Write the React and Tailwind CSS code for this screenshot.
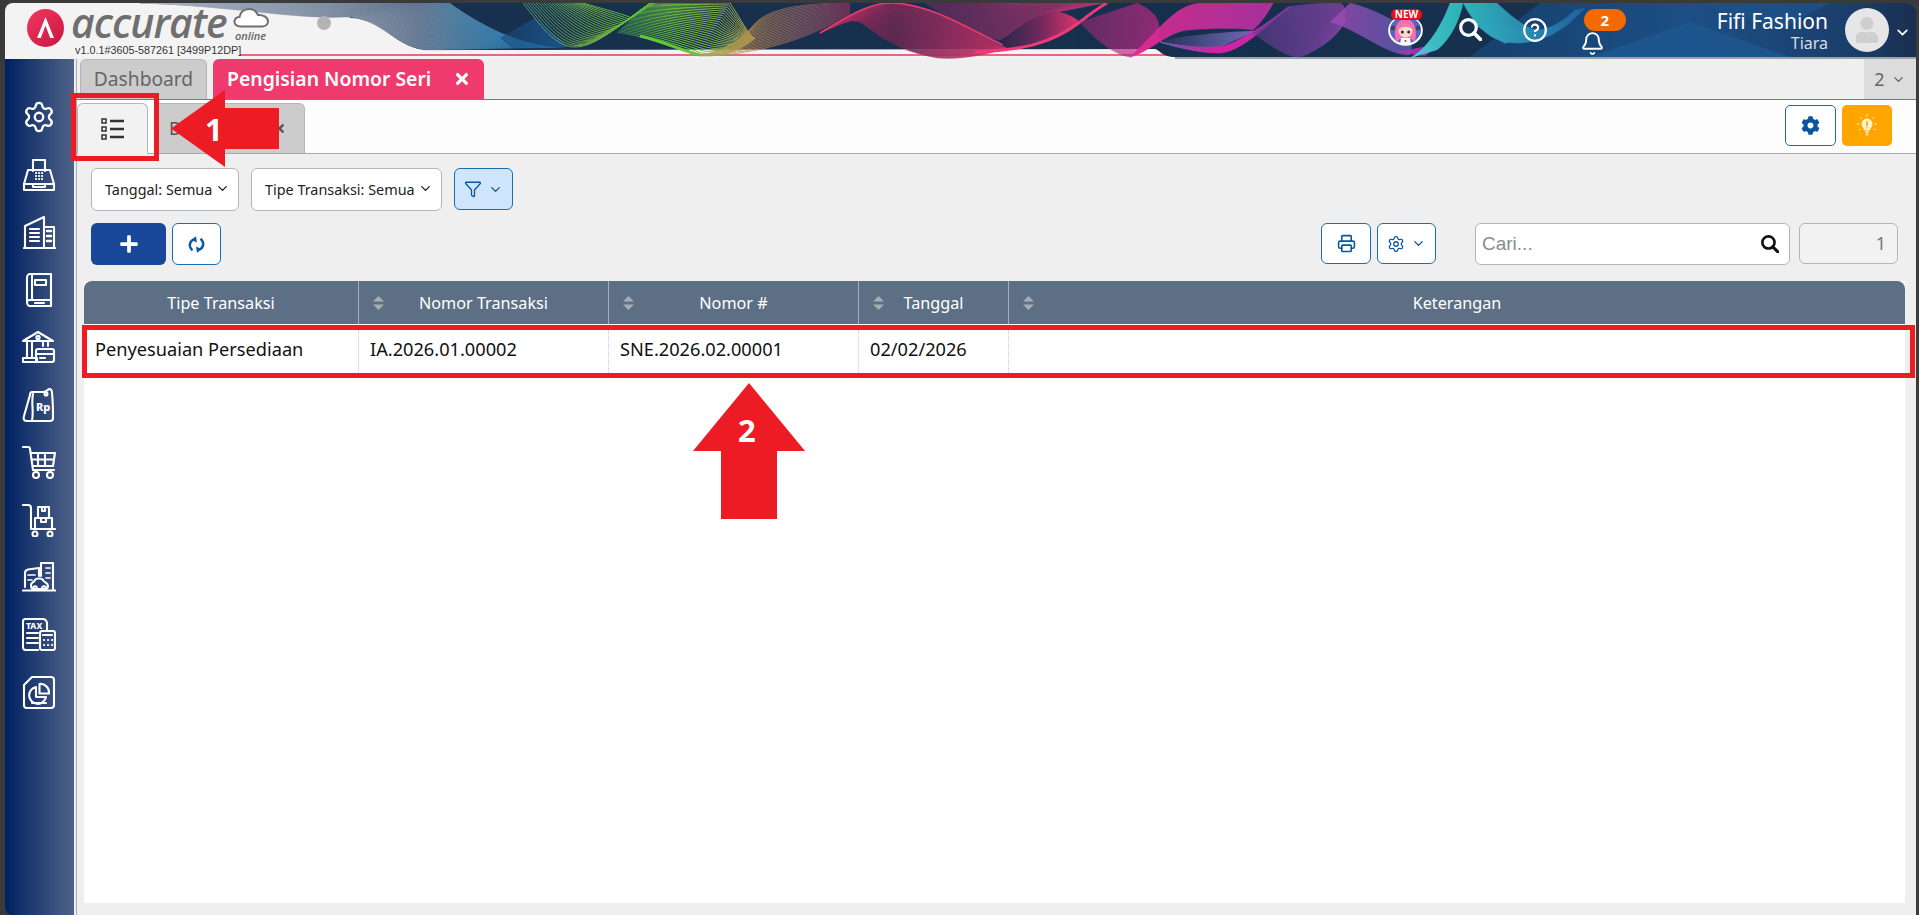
import React from "react";
import { Settings, ChevronDown, Funnel, Printer, CircleHelp, Bell } from "lucide-react";
import { FaCog, FaTimes, FaPlus, FaUser } from "react-icons/fa";

const toD = (v) => {
  let d = `M${v[0].toFixed(1)} ${v[1].toFixed(1)}`;
  for (let i = 2; i < v.length; i += 6) {
    d += `C${v.slice(i, i + 6).map((x) => x.toFixed(1)).join(" ")}`;
  }
  return d;
};
const interp = (a, b, t) => toD(a.map((n, i) => n + (b[i] - n) * t));
const reversed = (v) => {
  const out = [];
  for (let i = v.length - 2; i >= 0; i -= 2) out.push(v[i], v[i + 1]);
  return out;
};
const fillD = (a, b) => {
  const r = reversed(b);
  let d = toD(a) + `L${r[0]} ${r[1]}`;
  for (let i = 2; i < r.length; i += 6) d += `C${r.slice(i, i + 6).join(" ")}`;
  return d + "Z";
};

const Ribbon = ({ a, b, id, n = 26, w = 0.7, o = 0.85, f = 0, ls }) => (
  <g>
    {f > 0 && <path d={fillD(a, b)} fill={`url(#${id})`} opacity={f} />}
    <g stroke={ls || `url(#${id})`} strokeWidth={w} fill="none" opacity={o}>
      {Array.from({ length: n }, (_, i) => (
        <path key={i} d={interp(a, b, i / (n - 1))} />
      ))}
    </g>
  </g>
);

const Grad = ({ id, x1, x2, stops }) => (
  <linearGradient id={id} gradientUnits="userSpaceOnUse" x1={x1} x2={x2} y1="0" y2="0">
    {stops.map(([o, c], i) => (
      <stop key={i} offset={o} stopColor={c} />
    ))}
  </linearGradient>
);

const HeaderArt = () => (
  <svg className="absolute inset-0 h-full w-full" viewBox="5 3 1911 56" preserveAspectRatio="none">
    <defs>
      <Grad id="g1" x1={140} x2={565} stops={[[0, "#f3f3f3"], [0.45, "#9aa3b5"], [0.65, "#6f8098"], [0.85, "#3585b5"], [1, "#1a70b0"]]} />
      <Grad id="ga" x1={523} x2={650} stops={[[0, "#5a9a70"], [0.6, "#6fb040"], [1, "#62cc30"]]} />
      <Grad id="gb" x1={617} x2={755} stops={[[0, "#2f7a50"], [0.4, "#70c838"], [0.75, "#90b848"], [1, "#b89a50"]]} />
      <Grad id="gc" x1={700} x2={850} stops={[[0, "#a0b050"], [0.35, "#b88a50"], [0.7, "#a0606a"], [1, "#803058"]]} />
      <Grad id="gp" x1={820} x2={1007} stops={[[0, "#a02858"], [0.4, "#50264e"], [1, "#d03068"]]} />
      <Grad id="gq" x1={925} x2={1105} stops={[[0, "#7a2a60"], [0.6, "#c83070"], [1, "#e03a80"]]} />
      <Grad id="gd" x1={1000} x2={1080} stops={[[0, "#24294c"], [0.5, "#70285c"], [1, "#e03470"]]} />
      <Grad id="gm" x1={1080} x2={1170} stops={[[0, "#8a2a70"], [1, "#d82a90"]]} />
      <Grad id="gu" x1={1130} x2={1273} stops={[[0, "#e02a90"], [1, "#b832a8"]]} />
      <Grad id="gl" x1={1160} x2={1290} stops={[[0, "#5a62a8"], [0.4, "#d820a8"], [1, "#c030b0"]]} />
      <Grad id="gi" x1={1160} x2={1253} stops={[[0, "#24305a"], [1, "#7a70c0"]]} />
      <Grad id="g6" x1={1253} x2={1345} stops={[[0, "#5a3a88"], [1, "#9a48b8"]]} />
      <Grad id="g7" x1={1330} x2={1415} stops={[[0, "#a848b8"], [1, "#5a62b8"]]} />
      <Grad id="gt" x1={1410} x2={1463} stops={[[0, "#50c8d8"], [1, "#2cb8b8"]]} />
      <Grad id="g8" x1={1463} x2={1585} stops={[[0, "#30b8c0"], [0.5, "#2a90b0"], [1, "#2060a0"]]} />
      <Grad id="gbg" x1={1470} x2={1916} stops={[[0, "#15406e"], [0.5, "#1c4f85"], [0.85, "#1a3e6c"], [1, "#1a2f50"]]} />
      <Grad id="gs" x1={500} x2={565} stops={[[0, "#1a4070"], [1, "#1c70b8"]]} />
    </defs>
    <rect x="240" y="54" width="930" height="2" fill="#e9667f" />
    <path d="M350 3L350 18C385 18 395 50 430 50L1155 49C1160 50 1162 57 1175 57L1916 57L1916 3Z" fill="#17304e" />
    <path d="M1470 57L1540 3L1916 3L1916 57Z" fill="url(#gbg)" />
    <path d="M1590 57L1690 22L1790 57Z" fill="#1e5a92" opacity="0.7" />
    <path d="M1700 3L1780 30L1830 3Z" fill="#1c5288" opacity="0.8" />
    <rect x="1175" y="57" width="741" height="2" fill="#9aa3ad" />
    <Ribbon id="g1" a={[140, 3, 220, 5, 300, 20, 345, 17, 385, 18, 395, 50, 430, 50, 460, 50, 490, 49, 530, 48]} b={[140, 3, 220, 3, 300, 3, 400, 3, 430, 3, 440, 3, 450, 3, 480, 25, 520, 46, 565, 48]} f={1} n={22} w={0.6} o={0.35} ls="#2a4a6a" />
    <path d="M500 38L535 18L568 47L512 48Z" fill="url(#gs)" opacity="0.55" />
    <Ribbon id="ga" a={[523, 3, 540, 25, 555, 47, 575, 47, 595, 47, 615, 28, 650, 3]} b={[583, 3, 600, 8, 620, 13, 632, 18, 638, 14, 645, 8, 655, 3]} n={24} w={1} o={0.95} />
    <Ribbon id="gb" a={[617, 32, 640, 36, 665, 42, 700, 55, 715, 57, 735, 55, 755, 38]} b={[650, 3, 680, 3, 710, 3, 730, 3, 738, 15, 745, 28, 752, 37]} n={26} w={1} o={0.95} />
    <path d="M640 36C665 42 680 50 700 55" stroke="#62c830" strokeWidth="3" fill="none" />
    <Ribbon id="gc" a={[700, 56, 730, 56, 790, 50, 850, 14]} b={[745, 42, 752, 20, 765, 3, 850, 3]} n={22} w={0.8} o={0.85} f={0.2} />
    <Ribbon id="gq" a={[925, 3, 950, 20, 975, 35, 1000, 40, 1015, 30, 1035, 14, 1057, 12]} b={[1010, 3, 1020, 3, 1040, 3, 1060, 3, 1070, 3, 1080, 3, 1105, 3]} n={24} w={0.6} o={0.6} f={0.45} />
    <path d="M905 50C925 57 950 60 985 50Z" fill="#8a7a95" opacity="0.7" />
    <Ribbon id="gp" a={[820, 33, 850, 20, 850, 20, 860, 22, 880, 35, 895, 50, 937, 58, 960, 60, 985, 55, 1007, 48]} b={[820, 33, 850, 15, 870, 3, 890, 3, 930, 3, 970, 30, 1000, 45, 1003, 46, 1005, 47, 1007, 48]} n={30} w={0.6} o={0.5} f={0.8} ls="#d83068" />
    <path d="M820 33C850 15 870 3 890 3C930 3 970 30 1003 45" stroke="#e83a70" strokeWidth="1.6" fill="none" />
    <Ribbon id="gd" a={[1000, 42, 1020, 25, 1040, 12, 1057, 12, 1065, 12, 1075, 18, 1080, 22]} b={[1007, 48, 1040, 48, 1060, 38, 1080, 22, 1080, 22, 1080, 22, 1080, 22]} n={8} w={0.5} o={0.3} f={1} />
    <path d="M975 52C1020 50 1050 45 1080 22C1090 14 1098 8 1107 3" stroke="#ee3a78" strokeWidth="3" fill="none" />
    <Ribbon id="gm" a={[1080, 22, 1095, 40, 1115, 55, 1130, 57]} b={[1137, 3, 1155, 12, 1165, 20, 1155, 45]} n={24} w={0.6} o={0.6} f={0.6} />
    <Ribbon id="gu" a={[1130, 57, 1150, 52, 1170, 30, 1190, 30, 1210, 28, 1240, 28, 1253, 30, 1262, 22, 1268, 12, 1273, 3]} b={[1130, 57, 1160, 30, 1175, 3, 1203, 3, 1225, 3, 1250, 3, 1273, 3, 1273, 3, 1273, 3, 1273, 3]} n={24} w={0.6} o={0.6} f={0.85} />
    <Ribbon id="gi" a={[1165, 43, 1185, 47, 1205, 48, 1220, 48, 1230, 42, 1245, 36, 1253, 32]} b={[1165, 40, 1185, 36, 1220, 32, 1253, 31, 1253, 31, 1253, 31, 1253, 32]} n={6} w={0.5} o={0.3} f={0.9} />
    <Ribbon id="gl" a={[1160, 42, 1185, 50, 1205, 53, 1220, 53, 1245, 50, 1265, 25, 1290, 7]} b={[1160, 42, 1190, 48, 1210, 48, 1225, 46, 1240, 40, 1255, 32, 1290, 7]} n={12} w={0.8} o={0.9} f={0.9} />
    <Ribbon id="g6" a={[1253, 33, 1270, 45, 1285, 57, 1300, 57, 1320, 50, 1340, 35, 1345, 20]} b={[1287, 7, 1295, 5, 1320, 3, 1340, 3, 1345, 5, 1345, 10, 1345, 20]} n={24} w={0.6} o={0.6} f={0.6} />
    <Ribbon id="g7" a={[1330, 22, 1360, 30, 1385, 55, 1410, 55]} b={[1350, 3, 1380, 10, 1395, 25, 1415, 28]} n={24} w={0.6} o={0.6} f={0.7} />
    <path d="M1395 52L1440 44L1425 56Z" fill="#b030b0" opacity="0.9" />
    <path d="M1470 22L1540 30L1505 44Z" fill="#3c80e0" opacity="0.85" />
    <Ribbon id="gt" a={[1410, 58, 1425, 50, 1440, 30, 1450, 3]} b={[1437, 50, 1450, 40, 1460, 20, 1463, 3]} n={12} w={0.6} o={0.5} f={0.95} />
    <Ribbon id="g8" a={[1463, 3, 1475, 25, 1490, 43, 1515, 43, 1540, 43, 1560, 35, 1585, 8]} b={[1497, 3, 1510, 15, 1525, 28, 1537, 30, 1550, 30, 1565, 20, 1575, 10]} n={16} w={0.6} o={0.5} f={0.95} />
  </svg>
);

const Logo = () => (
  <svg width="37" height="38" viewBox="0 0 37 38" className="shrink-0">
    <defs>
      <linearGradient id="lg" x1="0" y1="0" x2="1" y2="1">
        <stop offset="0" stopColor="#f0385f" />
        <stop offset="1" stopColor="#c9173f" />
      </linearGradient>
    </defs>
    <ellipse cx="18.5" cy="19" rx="18.5" ry="19" fill="url(#lg)" />
    <path d="M10 29L18.5 8L27 29L23.2 29L18.5 16.5L13.8 29Z" fill="#fff" />
  </svg>
);

const Cloud = () => (
  <svg width="36" height="20" viewBox="0 0 36 20" fill="none" stroke="#6f6f6f" strokeWidth="2">
    <path d="M8 18.5C3 18.5 1 15.5 1.5 13C2 10.5 4 9 6.5 9C7 4.5 11 1 16 1C20.5 1 23.5 3.5 25 7C29.5 6.5 35 9 35 13.5C35 17 32 18.5 29 18.5Z" fill="#fff" />
  </svg>
);

const Chibi = () => (
  <svg width="35" height="31" viewBox="0 0 35 31">
    <ellipse cx="17.5" cy="15.5" rx="17.3" ry="15.3" fill="#fff" />
    <ellipse cx="17.5" cy="15" rx="15.5" ry="13.5" fill="#4f68c4" />
    <circle cx="5" cy="13" r="2.4" fill="#445" />
    <circle cx="30" cy="13" r="2.4" fill="#445" />
    <path d="M8 27C5 14 9 4 17.5 4C26 4 30 14 27 27L23 24L12 24Z" fill="#f36fae" />
    <ellipse cx="17.5" cy="16" rx="7" ry="6.5" fill="#fbdccb" />
    <path d="M10.5 14C12 8 23 8 24.5 14C20 11 15 11 10.5 14Z" fill="#f36fae" />
    <circle cx="14.3" cy="17" r="1.5" fill="#402030" />
    <circle cx="20.7" cy="17" r="1.5" fill="#402030" />
    <path d="M12 30L13 23H22L23 30Z" fill="#fff" />
    <circle cx="17.5" cy="26" r="1" fill="#d22" />
  </svg>
);

const Loupe = ({ size, sw, className = "" }) => (
  <svg width={size} height={size} viewBox="0 0 23 23" fill="none" stroke="currentColor" className={className}>
    <circle cx="9.5" cy="9.5" r="7.8" strokeWidth={sw} />
    <path d="M15 15L21.5 21.5" strokeWidth={sw + 0.6} strokeLinecap="round" />
  </svg>
);

const S = { fill: "none", stroke: "#fff", strokeWidth: 2.1, strokeLinejoin: "round", strokeLinecap: "round" };

const Fax = () => (
  <svg width="34" height="34" viewBox="0 0 34 34" {...S}>
    <path d="M11 13V2H23V13" />
    <path d="M6 12H28L32 26V32H2V26Z" />
    <path d="M2 26H32M11 26V29H23V26" />
    <path d="M14 15h.1M17 15h.1M20 15h.1M14 18h.1M17 18h.1M20 18h.1M14 21h.1M17 21h.1M20 21h.1" strokeWidth="2.2" />
  </svg>
);
const Building = () => (
  <svg width="34" height="34" viewBox="0 0 34 34" {...S}>
    <path d="M2 33H33" />
    <path d="M3 33V11L22 2V33" />
    <path d="M22 12H32V33" />
    <path d="M8 14H17M8 18H17M8 22H17M8 26H17" />
    <path d="M25 16H29M25 21H29M25 26H29" strokeWidth="2.4" />
  </svg>
);
const Book = () => (
  <svg width="34" height="34" viewBox="0 0 34 34" {...S}>
    <path d="M5 28V5C5 3 6 1 8 1H29V33H8C6 33 5 31 5 29C5 27 6 27 8 27H29" />
    <path d="M10 1V27" />
    <rect x="13" y="7" width="11" height="5" />
    <path d="M13 30H22" />
  </svg>
);
const Bank = () => (
  <svg width="34" height="34" viewBox="0 0 34 34" {...S}>
    <path d="M1 11L16 2L31 11Z" />
    <circle cx="16" cy="7.5" r="1.6" />
    <path d="M5 12V27M10 12V27M21 12V16M26 12V16" />
    <path d="M1 32V28H15V32Z" />
    <rect x="14" y="19" width="18" height="13" rx="2" />
    <path d="M14 24H32M18 28H23" />
  </svg>
);
const Tag = () => (
  <svg width="34" height="34" viewBox="0 0 34 34" {...S}>
    <path d="M10 4H22C25 3 27 1 27 1C29 1 30 3 30 5C31 14 31 24 31 30C31 32 30 33 28 33H5C2 33 1 31 2 28L8 7C8 5 9 4 10 4Z" />
    <path d="M11 6C9 14 12 24 10 33" />
    <circle cx="24" cy="6" r="1.5" />
    <text x="14" y="23" fontSize="11" fontWeight="800" fill="#fff" stroke="none" fontFamily="'Noto Sans',sans-serif">Rp</text>
  </svg>
);
const Cart = () => (
  <svg width="34" height="34" viewBox="0 0 34 34" {...S}>
    <path d="M1 2H6C7 2 8 3 8 4L11 25H32" />
    <path d="M9 8H33L31 21H11" />
    <path d="M16 8V21M23 8V21M10 14.5H32" />
    <circle cx="14" cy="30" r="3" />
    <circle cx="28" cy="30" r="3" />
  </svg>
);
const Trolley = () => (
  <svg width="34" height="34" viewBox="0 0 34 34" {...S}>
    <path d="M1 2H6C8 2 9 3 9 5V26H33" />
    <rect x="13" y="15" width="17" height="11" />
    <rect x="16" y="4" width="11" height="11" />
    <path d="M20 4V8H23V4M19 15V19H24V15" />
    <circle cx="13" cy="31" r="2.5" />
    <circle cx="28" cy="31" r="2.5" />
  </svg>
);
const City = () => (
  <svg width="34" height="30" viewBox="0 0 34 30" {...S}>
    <path d="M1 28.5H34" />
    <path d="M3 25V11C3 9 4 8 6 7.5L17 6V14" />
    <path d="M19 14V1H31V28" />
    <path d="M24 6H28M24 11H28M24 16H28M6 13H13M6 18H10" strokeWidth="1.7" />
    <path d="M9 23C9 20 12 21 13 18C14 16 20 16 21 18C22 21 26 20 26 24C26 27 24 27 23 27H11C9 27 9 25 9 23Z" />
    <circle cx="13" cy="26" r="1.8" />
    <circle cx="22" cy="26" r="1.8" />
  </svg>
);
const Tax = () => (
  <svg width="34" height="33" viewBox="0 0 34 33" {...S}>
    <path d="M16 32H4C2 32 1 31 1 29V3C1 2 2 1 4 1H21C23 1 25 3 25 5V12" />
    <text x="4" y="11" fontSize="8.5" fontWeight="800" fill="#fff" stroke="none" fontFamily="'Noto Sans',sans-serif">TAX</text>
    <path d="M5 15H16M5 20H16M5 25H16" />
    <rect x="18" y="13" width="15" height="19" rx="2" />
    <path d="M21 17H30" />
    <path d="M22 22h.1M26 22h.1M30 22h.1M22 27h.1M26 27h.1M30 27h.1" strokeWidth="2.2" />
  </svg>
);
const Report = () => (
  <svg width="34" height="33" viewBox="0 0 34 33" {...S}>
    <path d="M10 1H29C31 1 32 2 32 4V29C32 31 31 32 29 32H5C3 32 2 31 2 29V9Z" />
    <path d="M14 11A8.5 8.5 0 1 0 24 21H14Z" />
    <path d="M17.5 8A8.5 8.5 0 0 1 27 17.5H17.5Z" />
    <path d="M10 27H24" />
  </svg>
);

const SortIcon = () => (
  <svg width="11" height="14" viewBox="0 0 11 14" className="absolute left-[14px] top-1/2 -translate-y-1/2" fill="#a8adb3">
    <path d="M5.5 0L11 5.6H0Z" />
    <path d="M5.5 14L0 8.4H11Z" />
  </svg>
);

const Chev = ({ className = "" }) => <ChevronDown size={15} strokeWidth={2.2} className={className} />;

const ListIcon = () => (
  <svg width="24" height="22" viewBox="0 0 24 22" fill="none" stroke="#333">
    <rect x="1" y="1" width="4" height="4" strokeWidth="1.5" />
    <rect x="1" y="9" width="4" height="4" strokeWidth="1.5" />
    <rect x="1" y="17" width="4" height="4" strokeWidth="1.5" />
    <path d="M9 3H23M9 11H23M9 19H23" strokeWidth="2.4" />
  </svg>
);

const Bulb = () => (
  <svg width="20" height="24" viewBox="0 0 20 24" fill="none" stroke="#fff4c8">
    <path d="M10 5C6.5 5 5 7.5 5 10C5 12.5 7 14 7.5 16H12.5C13 14 15 12.5 15 10C15 7.5 13.5 5 10 5Z" fill="#fff4c8" />
    <path d="M8 18H12M8.5 20.5H11.5" strokeWidth="1.5" />
    <path d="M10 7.5V12M10 13.3V14.2" stroke="#ffa500" strokeWidth="1.6" />
    <path d="M10 0V2.5M3 3L4.5 4.8M17 3L15.5 4.8M0 10H2.5M17.5 10H20M1.5 16L3.5 15M18.5 16L16.5 15" strokeWidth="1" />
  </svg>
);

const SyncIcon = () => (
  <svg width="17" height="19" viewBox="0 0 17 19" fill="none" stroke="#0b559e" strokeWidth="2.4">
    <path d="M5.5 4.5C2.5 6 1.5 9 2 11.5C2.4 13.2 3.3 14.4 4.5 15.3" />
    <path d="M11.5 14.5C14.5 13 15.5 10 15 7.5C14.6 5.8 13.7 4.6 12.5 3.7" />
    <path d="M8.5 1.5V8L3.5 4.5Z" fill="#0b559e" stroke="none" transform="rotate(-8 6 5)" />
    <path d="M8.5 17.5V11L13.5 14.5Z" fill="#0b559e" stroke="none" transform="rotate(-8 11 14)" />
  </svg>
);

const cols = ["w-[275px]", "w-[250px]", "w-[250px]", "w-[150px]", "flex-1"];
const heads = ["Tipe Transaksi", "Nomor Transaksi", "Nomor #", "Tanggal", "Keterangan"];
const cells = ["Penyesuaian Persediaan", "IA.2026.01.00002", "SNE.2026.02.00001", "02/02/2026", ""];

const side = [
  <Settings key="a" size={36} strokeWidth={1.6} color="#fff" />,
  <Fax key="b" />, <Building key="c" />, <Book key="d" />, <Bank key="e" />, <Tag key="f" />,
  <Cart key="g" />, <Trolley key="h" />, <City key="i" />, <Tax key="j" />, <Report key="k" />,
];

export default function App() {
  return (
    <div className="relative flex h-[915px] w-[1919px] flex-col overflow-hidden bg-[#3a3a3a] pl-[5px] pr-[3px] pt-[3px] font-['Noto_Sans',sans-serif] text-[#222]">
      <header className="relative h-[56px] shrink-0 overflow-hidden rounded-t-[8px] bg-[#f3f3f3]">
        <HeaderArt />
        <div className="relative flex h-full items-start">
          <div className="ml-[22px] mt-[6px]"><Logo /></div>
          <div className="relative ml-[7px] h-full w-[200px]">
            <span className="absolute left-0 top-0 font-['Open_Sans',sans-serif] text-[41px] font-semibold italic leading-[38px] tracking-[-1px] text-[#6f6f6f]">accurate</span>
            <span className="absolute left-[162px] top-[5px]"><Cloud /></span>
            <span className="absolute left-[164px] top-[26px] font-['Open_Sans',sans-serif] text-[11px] font-semibold italic leading-[14px] text-[#666]">online</span>
            <span className="absolute left-[4px] top-[41px] whitespace-nowrap font-['Liberation_Sans',sans-serif] text-[10.8px] leading-[12px] text-[#333]">v1.0.1#3605-587261 [3499P12DP]</span>
          </div>
          <span className="ml-[46px] mt-[13px] h-[14px] w-[14px] rounded-full bg-[#b4b4b4]" />
          <div className="ml-auto flex h-full items-start text-white">
            <div className="relative mr-[36px] mt-[12px] h-[31px] w-[35px]">
              <Chibi />
              <span className="absolute left-[3px] top-[-6px] rounded-full bg-[#e8101a] px-[4px] text-[10px] font-bold leading-[11px]">NEW</span>
            </div>
            <Loupe size={23} sw={3.2} className="mr-[40px] mt-[15px]" />
            <CircleHelp size={26} strokeWidth={2} className="mr-[32px] mt-[14px]" />
            <div className="relative mr-[112px] mt-[28px]">
              <Bell size={25} strokeWidth={1.8} />
              <span className="absolute left-[4px] top-[-22px] flex h-[22px] w-[42px] items-center justify-center rounded-full bg-[#f56a00] text-[15px] font-bold">2</span>
            </div>
            <div className="mr-[17px] mt-[4px] text-right">
              <div className="text-[21px] leading-[28px]">Fifi Fashion</div>
              <div className="-mt-[2px] text-[16px] leading-[20px] text-[#d8dee6]">Tiara</div>
            </div>
            <div className="mt-[5px] flex h-[44px] w-[44px] items-center justify-center overflow-hidden rounded-full bg-[#e6e6e6]">
              <FaUser size={26} color="#cfcfcf" />
            </div>
            <ChevronDown size={17} strokeWidth={2.5} className="ml-[5px] mr-[5px] mt-[21px]" />
          </div>
        </div>
      </header>

      <div className="flex min-h-0 flex-1">
        <aside className="flex w-[69px] shrink-0 flex-col items-center gap-[23.5px] rounded-bl-[8px] bg-gradient-to-r from-[#002060] to-[#506289] pr-[2px] pt-[41px]">
          {side.map((icon, i) => (
            <div key={i} className="flex h-[34px] w-[34px] items-center justify-center">{icon}</div>
          ))}
        </aside>

        <main className="flex min-w-0 flex-1 flex-col bg-[#efefef] pl-[2px]">
          <div className="flex h-[41px] shrink-0 items-end border-b border-l border-b-[#e0486f] border-l-[#a9a9a9] pl-[3px]">
            <div className="flex h-[40px] w-[127px] items-center justify-center rounded-t-[6px] border border-b-0 border-[#b5b5b5] bg-[#cccccc] text-[19.2px] text-[#666]">Dashboard</div>
            <div className="ml-[6px] flex h-[40px] w-[271px] items-center rounded-t-[6px] bg-[#ee3a6c] pl-[14px] pr-[13px] text-[19.4px] font-semibold text-white">
              <span className="whitespace-nowrap">Pengisian Nomor Seri</span>
              <FaTimes size={18} className="ml-auto" />
            </div>
            <div className="ml-auto flex h-[40px] w-[52px] items-center justify-center gap-[6px] bg-[#dcdcdc] text-[#666]">
              <span className="text-[18px]">2</span><Chev />
            </div>
          </div>

          <div className="flex min-h-0 flex-1 flex-col border-l border-[#a9a9a9]">
            <div className="flex h-[54px] shrink-0 items-end border-b border-[#aaa] bg-[#fdfdfd] pr-[24px]">
              <div className="-mb-px flex h-[51px] w-[71px] items-center justify-center rounded-t-[6px] border border-b-0 border-[#b5b5b5] bg-[#f2f2f2]"><ListIcon /></div>
              <div className="ml-[6px] flex h-[50px] w-[151px] items-center justify-between rounded-t-[6px] border border-b-0 border-[#b5b5b5] bg-[#cccccc] pl-[14px] pr-[18px] text-[18px] text-[#555]">
                <span>D</span><FaTimes size={13} />
              </div>
              <div className="ml-auto flex gap-[6px] self-start pt-[5px]">
                <button className="flex h-[41px] w-[51px] items-center justify-center rounded-[5px] border border-[#1c6cb0] bg-white text-[#0b559e]"><FaCog size={19} /></button>
                <button className="flex h-[41px] w-[50px] items-center justify-center rounded-[5px] bg-[#ffa500]"><Bulb /></button>
              </div>
            </div>

            <div className="flex min-h-0 flex-1 flex-col pb-[12px] pl-[7px] pr-[11px]">
              <div className="ml-[7px] mt-[14px] flex h-[43px] shrink-0 gap-[12px] text-[14.4px] text-[#222]">
                <button className="flex w-[148px] items-center gap-[3px] rounded-[6px] border border-[#b5b5b5] bg-white pl-[13px]"><span className="whitespace-nowrap">Tanggal: Semua</span><Chev className="-mt-[3px]" /></button>
                <button className="flex w-[191px] items-center gap-[3px] rounded-[6px] border border-[#b5b5b5] bg-white pl-[13px]"><span className="whitespace-nowrap">Tipe Transaksi: Semua</span><Chev className="-mt-[3px]" /></button>
                <button className="flex h-[42px] w-[59px] items-center justify-center gap-[6px] rounded-[6px] border border-[#1c6cb0] bg-[#cfe5fb] text-[#0b559e]"><Funnel size={18} strokeWidth={1.7} /><Chev /></button>
              </div>

              <div className="ml-[7px] mt-[12px] flex h-[42px] shrink-0 items-start">
                <button className="flex h-[42px] w-[75px] items-center justify-center rounded-[6px] bg-[#19479a] text-white"><FaPlus size={20} /></button>
                <button className="ml-[6px] flex h-[42px] w-[49px] items-center justify-center rounded-[6px] border border-[#1c6cb0] bg-white"><SyncIcon /></button>
                <div className="ml-auto flex">
                  <button className="flex h-[41px] w-[50px] items-center justify-center rounded-[6px] border border-[#1c6cb0] bg-white text-[#0b559e]"><Printer size={19} strokeWidth={2} /></button>
                  <button className="ml-[6px] flex h-[41px] w-[59px] items-center justify-center gap-[6px] rounded-[6px] border border-[#1c6cb0] bg-white text-[#0b559e]"><Settings size={18} strokeWidth={1.7} /><Chev /></button>
                  <div className="ml-[39px] flex h-[42px] w-[315px] items-center rounded-[6px] border border-[#b5b5b5] bg-white pl-[6px] pr-[10px]">
                    <span className="font-['Liberation_Sans',sans-serif] text-[19px] text-[#8b8b8b]">Cari...</span>
                    <Loupe size={18} sw={3.4} className="ml-auto text-[#111]" />
                  </div>
                  <div className="ml-[9px] mr-[7px] flex h-[41px] w-[99px] items-center justify-end rounded-[6px] border border-[#b5b5b5] bg-[#f2f2f2] pr-[11px] text-[18px] text-[#777]">1</div>
                </div>
              </div>

              <div className="mt-[16px] flex min-h-0 flex-1 flex-col bg-white">
                <div className="flex h-[43px] shrink-0 items-stretch rounded-t-[8px] bg-[#5c6f85] text-[16.2px] text-white">
                  {heads.map((h, i) => (
                    <div key={h} className={`${cols[i]} relative flex items-center justify-center pt-[2px] ${i < 4 ? "border-r border-[#a4adb8]" : ""}`}>
                      {i > 0 && <SortIcon />}
                      {h}
                    </div>
                  ))}
                </div>
                <div className="mt-px flex h-[50px] shrink-0 text-[18.2px] text-[#111]">
                  {cells.map((c, i) => (
                    <div key={i} className={`${cols[i]} flex items-center pb-[1px] pl-[11px] ${i < 4 ? "border-r border-dotted border-[#c8c8c8]" : ""}`}>{c}</div>
                  ))}
                </div>
              </div>
            </div>
          </div>
        </main>
      </div>

      {/* annotations drawn over the page */}
      <div className="absolute left-[71px] top-[93px] h-[68px] w-[88px] border-[5px] border-[#ed1c24]" />
      <div className="absolute left-[82px] top-[325px] h-[53px] w-[1833px] border-[5px] border-[#ed1c24]" />
      <svg className="absolute left-[171px] top-[90px]" width="108" height="77" viewBox="0 0 108 77">
        <path d="M0 38.5L54 0V18H108V59H54V77Z" fill="#ed1c24" />
      </svg>
      <span className="absolute left-[205px] top-[108px] text-[31px] font-bold leading-[42px] text-white">1</span>
      <svg className="absolute left-[693px] top-[383px]" width="112" height="136" viewBox="0 0 112 136">
        <path d="M56 0L112 68H84V136H28V68H0Z" fill="#ed1c24" />
      </svg>
      <span className="absolute left-[738px] top-[409px] text-[31px] font-bold leading-[42px] text-white">2</span>
    </div>
  );
}
